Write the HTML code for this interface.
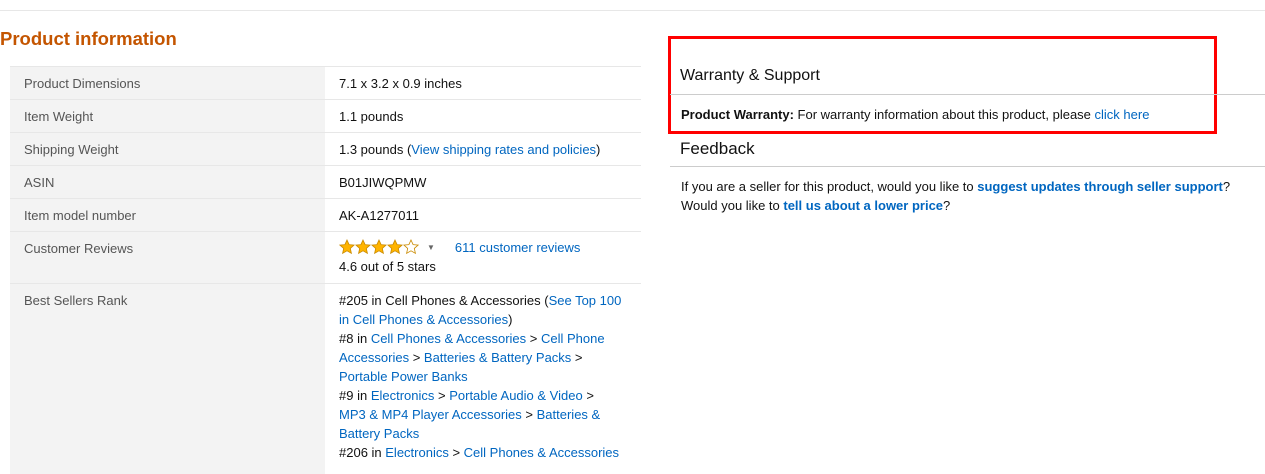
<!DOCTYPE html>
<html><head><style>
body{margin:0;width:1265px;height:466px;overflow:hidden;background:#fff;font-family:"Liberation Sans",Arial,sans-serif;font-size:13px;color:#111;position:relative}
a{color:#0066c0;text-decoration:none}
.top{position:absolute;left:0;right:0;top:10px;border-top:1px solid #e7e7e7}
h2{position:absolute;left:0;top:28px;margin:0;font-size:18.5px;color:#c45500;font-weight:bold}
table{position:absolute;left:10px;top:66px;width:631px;border-collapse:collapse}
td{border-top:1px solid #e7e7e7;padding:0 14px;height:33px;vertical-align:top;line-height:19px;padding-top:7px;box-sizing:border-box}
td.l{background:#f3f3f3;width:315px;color:#555}
td.v{color:#111;padding-right:18px}
.box{position:absolute;left:668px;top:36px;width:543px;height:92px;border:3px solid #f00}
.h{position:absolute;font-size:16px;color:#111}
.ln{position:absolute;left:670px;right:0;border-top:1px solid #ccc}
.t{position:absolute;left:681px;color:#111}
</style></head><body>
<div class="top"></div>
<h2>Product information</h2>
<table>
<tr><td class="l">Product Dimensions</td><td class="v">7.1 x 3.2 x 0.9 inches</td></tr>
<tr><td class="l">Item Weight</td><td class="v">1.1 pounds</td></tr>
<tr><td class="l">Shipping Weight</td><td class="v">1.3 pounds (<a>View shipping rates and policies</a>)</td></tr>
<tr><td class="l">ASIN</td><td class="v">B01JIWQPMW</td></tr>
<tr><td class="l">Item model number</td><td class="v">AK-A1277011</td></tr>
<tr><td class="l" style="height:52px">Customer Reviews</td><td class="v" style="padding-top:6px"><svg width="80" height="16" viewBox="0 0 80 16" style="vertical-align:-3px"><defs><path id="s" d="M8 1l2.1 4.6 5 .5-3.8 3.3 1.1 4.9L8 11.8 3.6 14.3l1.1-4.9L.9 6.1l5-.5z" stroke="#c98a00" stroke-width=".8"/><clipPath id="c"><rect x="64" y="0" width="8" height="16"/></clipPath></defs><use href="#s" fill="#ffb400"/><use href="#s" x="16" fill="#ffb400"/><use href="#s" x="32" fill="#ffb400"/><use href="#s" x="48" fill="#ffb400"/><use href="#s" x="64" fill="#fff"/><use href="#s" x="64" fill="#ffb400" clip-path="url(#c)"/></svg><span style="color:#666;font-size:8px;margin:0 20px 0 8px;vertical-align:2px">▼</span><a>611 customer reviews</a><br>4.6 out of 5 stars</td></tr>
<tr><td class="l" style="height:190px">Best Sellers Rank</td><td class="v">#205 in Cell Phones &amp; Accessories (<a>See Top 100 in Cell Phones &amp; Accessories</a>)<br>#8 in <a>Cell Phones &amp; Accessories</a> &gt; <a>Cell Phone Accessories</a> &gt; <a>Batteries &amp; Battery Packs</a> &gt; <a>Portable Power Banks</a><br>#9 in <a>Electronics</a> &gt; <a>Portable Audio &amp; Video</a> &gt; <a>MP3 &amp; MP4 Player Accessories</a> &gt; <a>Batteries &amp; Battery Packs</a><br>#206 in <a>Electronics</a> &gt; <a>Cell Phones &amp; Accessories</a></td></tr>
</table>
<div class="box"></div>
<div class="h" style="left:680px;top:67px">Warranty &amp; Support</div>
<div class="ln" style="top:94px"></div>
<div class="t" style="top:107px"><b>Product Warranty:</b> For warranty information about this product, please <a>click here</a></div>
<div class="h" style="left:680px;top:139px;font-size:17px">Feedback</div>
<div class="ln" style="top:166px"></div>
<div class="t" style="top:177px;line-height:19px">If you are a seller for this product, would you like to <a><b>suggest updates through seller support</b></a>?<br>Would you like to <a><b>tell us about a lower price</b></a>?</div>
</body></html>
